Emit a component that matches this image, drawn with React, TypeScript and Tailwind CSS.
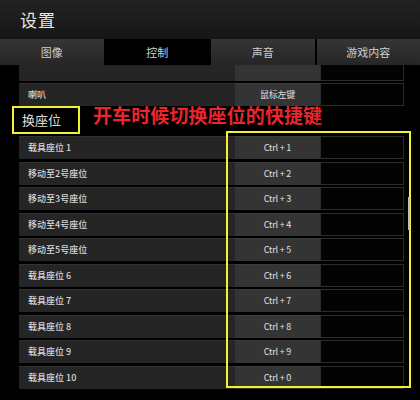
import React from 'react';

const tabs = ['图像', '控制', '声音', '游戏内容'];

const seats = [
  { label: '载具座位 1', key: 'Ctrl + 1' },
  { label: '移动至2号座位', key: 'Ctrl + 2' },
  { label: '移动至3号座位', key: 'Ctrl + 3' },
  { label: '移动至4号座位', key: 'Ctrl + 4' },
  { label: '移动至5号座位', key: 'Ctrl + 5' },
  { label: '载具座位 6', key: 'Ctrl + 6' },
  { label: '载具座位 7', key: 'Ctrl + 7' },
  { label: '载具座位 8', key: 'Ctrl + 8' },
  { label: '载具座位 9', key: 'Ctrl + 9' },
  { label: '载具座位 10', key: 'Ctrl + 0' },
];

function Row({ label, keyName }: { label: string; keyName: string }) {
  return (
    <div className="flex h-[23px] shrink-0">
      <div className="flex-1 flex items-center pl-[9px] bg-[#252525] border-t border-[#313131] text-[9px] font-medium text-[#d8d8d8]">
        {label}
      </div>
      <div className="w-[85px] flex items-center justify-center bg-[#343434] border-t border-[#3c3c3c] text-[9px] text-[#e0e0e0] tracking-[-0.2px]">
        {keyName}
      </div>
      <div className="w-[84px] bg-[#030303] border border-[#2c2c2c]" />
    </div>
  );
}

export default function App() {
  return (
    <div
      className="w-[420px] h-[400px] bg-black flex flex-col overflow-hidden"
      style={{ fontFamily: '"Noto Sans CJK SC", "Noto Sans", sans-serif' }}
    >
      <div className="h-[39px] shrink-0 flex items-center pl-[20px] bg-gradient-to-b from-[#222] to-[#161616]">
        <span className="text-[17px] text-[#e6e6e6] tracking-[1px]">设置</span>
      </div>
      <div className="h-[26px] shrink-0 flex gap-[2px] bg-black relative z-10">
        {tabs.map((t, i) => (
          <div
            key={t}
            className={
              i === 1
                ? 'flex-1 flex items-center justify-center bg-black text-[11px] text-[#d0d0d0]'
                : 'flex-1 flex items-center justify-center bg-gradient-to-b from-[#353535] to-[#262626] text-[11px] text-[#cfcfcf]'
            }
          >
            {t}
          </div>
        ))}
      </div>
      <div className="flex-1 relative">
        <div className="flex flex-col pl-[19px] pr-[16px] mt-[-7px]">
          <Row label="" keyName="" />
          <div className="h-[2px]" />
          <Row label="喇叭" keyName="鼠标左键" />
          <div className="h-[28px] flex items-center -ml-[7px]">
            <div className="h-[28px] w-[68px] border-2 border-[#f2f230] flex items-center pl-[8px] text-[13px] text-[#dcdcdc]">
              换座位
            </div>
          </div>
          <div className="flex flex-col gap-[2.5px] pt-[2px]">
            {seats.map((s) => (
              <Row key={s.key} label={s.label} keyName={s.key} />
            ))}
          </div>
        </div>
        <div className="absolute left-[93px] top-[40px] text-[19px] font-bold text-[#e8262c] leading-none tracking-[0.1px]">
          开车时候切换座位的快捷键
        </div>
        <div className="absolute left-[226px] top-[66px] w-[185px] h-[257px] border-2 border-[#f2f230]" />
        <div className="absolute left-[408px] top-[132px] w-[2px] h-[33px] bg-[#bdbdbd]" />
      </div>
    </div>
  );
}
